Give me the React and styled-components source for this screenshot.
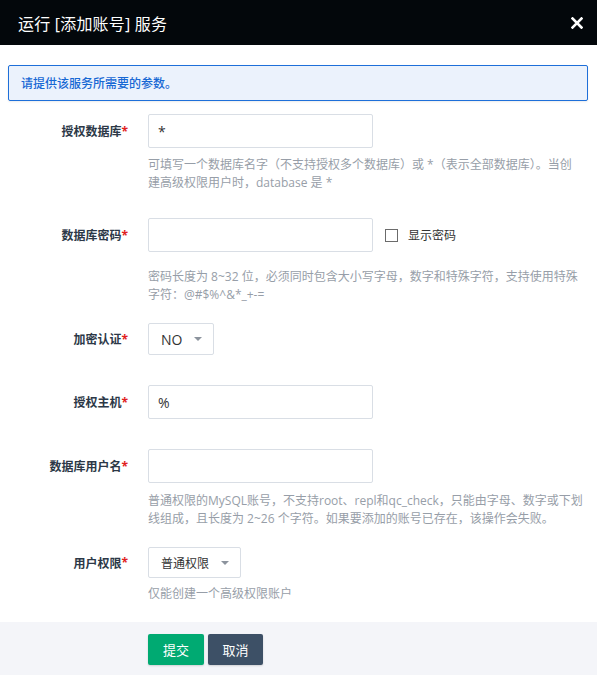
import React from "react";
import styled, { createGlobalStyle } from "styled-components";

const GlobalStyle = createGlobalStyle`
  html, body { margin: 0; padding: 0; background: #ffffff; }
  body {
    font-family: "Open Sans", "Noto Sans CJK SC", sans-serif;
    color: #333;
    -webkit-font-smoothing: antialiased;
  }
  * { box-sizing: border-box; }
`;

const Modal = styled.div`
  width: 597px;
  height: 675px;
  display: flex;
  flex-direction: column;
  background: #fff;
  overflow: hidden;
`;

const Header = styled.div`
  height: 45px;
  flex-shrink: 0;
  background: #03070b;
  display: flex;
  align-items: center;
  justify-content: space-between;
  padding: 0 14px 0 18px;
`;

const Title = styled.h1`
  margin: 0;
  font-size: 16px;
  font-weight: 400;
  color: #fff;
  letter-spacing: 0.2px;
`;

const CloseButton = styled.button`
  border: 0;
  background: none;
  padding: 0;
  width: 12px;
  height: 12px;
  display: flex;
  cursor: pointer;
`;

const Body = styled.div`
  padding: 20px 9px 0 8px;
`;

const Alert = styled.div`
  height: 36px;
  display: flex;
  align-items: center;
  padding: 0 12px;
  border: 1px solid #1e6fd9;
  border-radius: 2px;
  background: #ebf2fc;
  color: #1768d4;
  font-size: 12px;
  font-weight: 500;
  box-shadow: 0 1px 2px rgba(0, 0, 0, 0.08);
`;

const Form = styled.div`
  margin-top: 13px;
  display: flex;
  flex-direction: column;
`;

const Row = styled.div`
  display: grid;
  grid-template-columns: 120px 1fr;
  column-gap: 20px;
  margin-bottom: ${(p) => p.$gap}px;
`;

const Label = styled.label`
  height: ${(p) => p.$h}px;
  display: flex;
  align-items: center;
  justify-content: flex-end;
  font-size: 12px;
  font-weight: 700;
  color: #2c3847;
  white-space: nowrap;
`;

const Req = styled.span`
  color: #e02020;
`;

const Control = styled.div`
  display: flex;
  flex-direction: column;
  min-width: 0;
`;

const Line = styled.div`
  display: flex;
  align-items: center;
`;

const Input = styled.input`
  width: 225px;
  height: 34px;
  padding: 0 9px;
  border: 1px solid #d9dee5;
  border-radius: 2px;
  font-family: inherit;
  font-size: 14px;
  color: #333;
  background: #fff;
  outline: none;
`;

const Select = styled.div`
  height: ${(p) => p.$h}px;
  width: ${(p) => p.$w}px;
  display: flex;
  align-items: center;
  justify-content: space-between;
  padding: 0 11px 0 12px;
  border: 1px solid #d9dee5;
  border-radius: 2px;
  font-size: ${(p) => p.$fs}px;
  color: #333;
  background: #fff;
  cursor: pointer;
`;

const Caret = styled.span`
  width: 0;
  height: 0;
  border-left: 4px solid transparent;
  border-right: 4px solid transparent;
  border-top: 4px solid #8c939d;
`;

const CheckLabel = styled.label`
  display: flex;
  align-items: center;
  margin-left: 12px;
  font-size: 12px;
  color: #333;
  cursor: pointer;
`;

const Box = styled.span`
  width: 13px;
  height: 13px;
  border: 1px solid #6b6b6b;
  margin-right: 10px;
  background: #fff;
`;

const Help = styled.p`
  margin: ${(p) => p.$mt}px 0 0;
  max-width: ${(p) => p.$w || 440}px;
  font-size: 12px;
  line-height: 18px;
  color: #979ea8;
`;

const Footer = styled.div`
  flex: 1;
  background: #f4f5f9;
  padding: 12px 0 0 148px;
  display: flex;
  align-items: flex-start;
  gap: 4px;
`;

const Button = styled.button`
  height: 31px;
  width: ${(p) => p.$w}px;
  border: 0;
  border-radius: 2px;
  font-family: inherit;
  font-size: 13px;
  color: #fff;
  background: ${(p) => (p.$primary ? "#00aa72" : "#3d5066")};
  box-shadow: 0 1px 2px rgba(0, 0, 0, 0.15);
  cursor: pointer;
`;

const CloseIcon = () => (
  <svg width="12" height="12" viewBox="0 0 12 12">
    <path d="M1.5 1.5 L10.5 10.5 M10.5 1.5 L1.5 10.5" stroke="#fff" strokeWidth="2.6" strokeLinecap="square" />
  </svg>
);

export default function App() {
  return (
    <>
      <GlobalStyle />
      <Modal>
        <Header>
          <Title>运行 [添加账号] 服务</Title>
          <CloseButton aria-label="close">
            <CloseIcon />
          </CloseButton>
        </Header>
        <Body>
          <Alert>请提供该服务所需要的参数。</Alert>
          <Form>
            <Row $gap={26}>
              <Label $h={34}>授权数据库<Req>*</Req></Label>
              <Control>
                <Input defaultValue="*" />
                <Help $mt={8} $w={432}>
                  可填写一个数据库名字（不支持授权多个数据库）或 *（表示全部数据库）。当创建高级权限用户时，database 是 *
                </Help>
              </Control>
            </Row>
            <Row $gap={19}>
              <Label $h={34}>数据库密码<Req>*</Req></Label>
              <Control>
                <Line>
                  <Input type="password" />
                  <CheckLabel>
                    <Box />
                    显示密码
                  </CheckLabel>
                </Line>
                <Help $mt={16}>
                  密码长度为 8~32 位，必须同时包含大小写字母，数字和特殊字符，支持使用特殊字符：@#$%^&amp;*_+-=
                </Help>
              </Control>
            </Row>
            <Row $gap={30}>
              <Label $h={32}>加密认证<Req>*</Req></Label>
              <Control>
                <Select $w={66} $h={32} $fs={14}>
                  NO
                  <Caret />
                </Select>
              </Control>
            </Row>
            <Row $gap={30}>
              <Label $h={34}>授权主机<Req>*</Req></Label>
              <Control>
                <Input defaultValue="%" />
              </Control>
            </Row>
            <Row $gap={19}>
              <Label $h={34}>数据库用户名<Req>*</Req></Label>
              <Control>
                <Input />
                <Help $mt={9}>
                  普通权限的MySQL账号，不支持root、repl和qc_check，只能由字母、数字或下划线组成，且长度为 2~26 个字符。如果要添加的账号已存在，该操作会失败。
                </Help>
              </Control>
            </Row>
            <Row $gap={19}>
              <Label $h={31}>用户权限<Req>*</Req></Label>
              <Control>
                <Select $w={93} $h={31} $fs={12}>
                  普通权限
                  <Caret />
                </Select>
                <Help $mt={7}>仅能创建一个高级权限账户</Help>
              </Control>
            </Row>
          </Form>
        </Body>
        <Footer>
          <Button $primary $w={56}>提交</Button>
          <Button $w={55}>取消</Button>
        </Footer>
      </Modal>
    </>
  );
}
